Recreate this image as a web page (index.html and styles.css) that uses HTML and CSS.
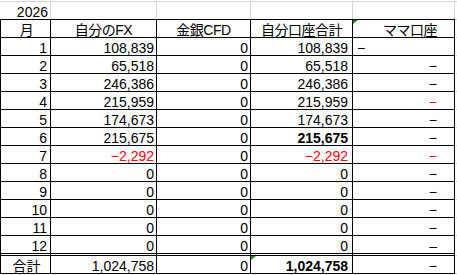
FILE: index.html
```html
<!DOCTYPE html>
<html lang="ja">
<head>
<meta charset="utf-8">
<title>2026</title>
<link rel="stylesheet" href="styles.css">
</head>
<body>
<div class="sheet">
  <div class="row top"><div>2026</div><div></div><div></div><div></div><div></div><div class="x"></div></div>
  <div class="row head"><div class="ctr">月</div><div class="ctr">自分のFX</div><div class="ctr">金銀CFD</div><div class="ctr">自分口座合計</div><div class="mama flag">ママ口座</div><div class="x"></div></div>
  <div class="row"><div>1</div><div>108,839</div><div>0</div><div>108,839</div><div class="dl">−</div><div class="x"></div></div>
  <div class="row"><div>2</div><div>65,518</div><div>0</div><div>65,518</div><div>−</div><div class="x"></div></div>
  <div class="row"><div>3</div><div>246,386</div><div>0</div><div>246,386</div><div>−</div><div class="x"></div></div>
  <div class="row"><div>4</div><div>215,959</div><div>0</div><div>215,959</div><div class="red">−</div><div class="x"></div></div>
  <div class="row"><div>5</div><div>174,673</div><div>0</div><div>174,673</div><div>−</div><div class="x"></div></div>
  <div class="row"><div>6</div><div>215,675</div><div>0</div><div class="b">215,675</div><div>−</div><div class="x"></div></div>
  <div class="row"><div>7</div><div class="red">−2,292</div><div>0</div><div class="red">−2,292</div><div class="red">−</div><div class="x"></div></div>
  <div class="row"><div>8</div><div>0</div><div>0</div><div>0</div><div>−</div><div class="x"></div></div>
  <div class="row"><div>9</div><div>0</div><div>0</div><div>0</div><div>−</div><div class="x"></div></div>
  <div class="row"><div>10</div><div>0</div><div>0</div><div>0</div><div>−</div><div class="x"></div></div>
  <div class="row"><div>11</div><div>0</div><div>0</div><div>0</div><div>−</div><div class="x"></div></div>
  <div class="row last"><div>12</div><div>0</div><div>0</div><div>0</div><div class="wide">–</div><div class="x"></div></div>
  <div class="row total"><div class="ctr">合計</div><div>1,024,758</div><div>0</div><div class="b flag">1,024,758</div><div>−</div><div class="x"></div></div>
</div>
</body>
</html>
```
FILE: styles.css
```css
html, body {
  margin: 0;
  background: #fff;
}
body {
  font-family: "Liberation Sans", "Noto Sans CJK JP", sans-serif;
  font-size: 14px;
  color: #000;
}
.sheet {
  padding-top: 1px;
}
.row {
  display: grid;
  grid-template-columns: 51px 106px 94px 102px 102px 3px;
}
.row > div {
  position: relative;
  box-sizing: border-box;
  height: 18px;
  padding-top: 3px;
  line-height: 14px;
  text-align: right;
  border-right: 1px solid #000;
  border-bottom: 1px solid #000;
  white-space: nowrap;
  overflow: visible;
}
.row > div:nth-child(1) { border-left: 1px solid #000; padding-right: 3px; }
.row > div:nth-child(2) { padding-right: 2px; }
.row > div:nth-child(3) { padding-right: 2px; }
.row > div:nth-child(4) { padding-right: 4px; }
.row > div:nth-child(5) { padding-right: 17px; }

.row > .x {
  border-right: 0;
  border-bottom: 1px solid #d6d6d6;
}

.top > div {
  border-top: 1px solid #d6d6d6;
  border-right-color: #d6d6d6;
  border-bottom: 0;
}
.top > div:nth-child(1) { border-left-color: #fff; padding-right: 2px; }
.top > .x { border-bottom: 0; }

.head > div {
  height: 19px;
  border-top: 1px solid #000;
}
.head > .x { border-top-color: #d6d6d6; }
.row > div.ctr { text-align: center; padding-right: 0; padding-left: 0; }
.row > div.ctr:nth-child(1) { padding-left: 2px; padding-right: 0; }
.head > .ctr { letter-spacing: -0.5px; }
.head > .mama { padding-right: 6px; letter-spacing: -0.5px; }

.last > div {
  height: 20px;
  border-bottom: 3px double #000;
}
.last > .x { border-bottom: 1px solid #d6d6d6; }

.row > .dl {
  text-align: left;
  padding-left: 4px;
}
.red { color: #ff0000; }
.b { font-weight: bold; }

.flag::after {
  content: "";
  position: absolute;
  top: 0;
  left: 0;
  width: 0;
  height: 0;
  border-top: 4px solid #1a8a1a;
  border-right: 5px solid transparent;
}
```
